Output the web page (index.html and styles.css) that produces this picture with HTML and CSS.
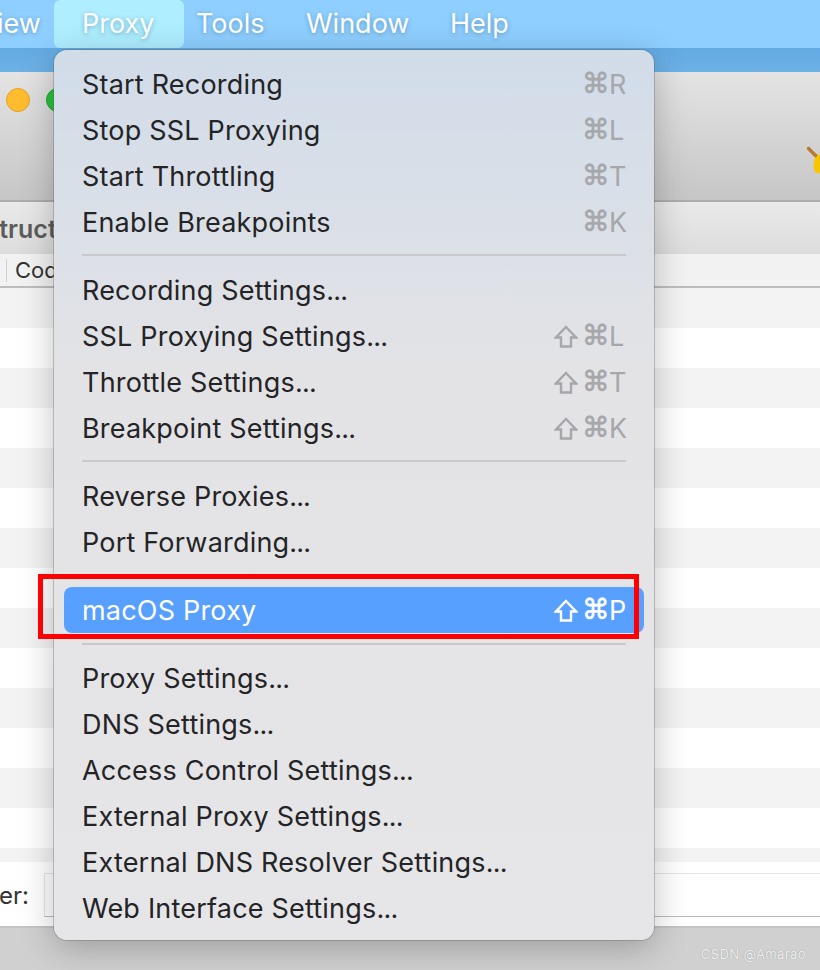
FILE: index.html
```html
<!DOCTYPE html>
<html lang="en">
<head>
    <meta charset="UTF-8">
    <meta name="viewport" content="width=device-width, initial-scale=1.0">
    <title>Proxy menu</title>
    <link rel="stylesheet" href="styles.css">
</head>
<body>
    <svg class="defs" width="0" height="0">
        <symbol id="shift" viewBox="0 0 24 23">
            <path d="M12 2 L22 12.5 H17 V21.5 H7 V12.5 H2 Z" fill="none" stroke="currentColor" stroke-width="2.4" stroke-linejoin="miter"/>
        </symbol>
    </svg>
    <div class="screen">
        <div class="menubar">
            <span class="bar-item bar-view">iew</span>
            <span class="bar-item bar-active">Proxy</span>
            <span class="bar-item bar-tools">Tools</span>
            <span class="bar-item bar-window">Window</span>
            <span class="bar-item bar-help">Help</span>
        </div>
        <div class="wallpaper"></div>

        <div class="window">
            <div class="toolbar">
                <span class="light light-yellow"></span>
                <span class="light light-green"></span>
                <svg class="broom" width="24" height="32" viewBox="0 0 24 32">
                    <path d="M13 9 L20 12 L20 30 L11 27 Q7 18 13 9 Z" fill="#f7c600"/>
                    <path d="M4.5 3.5 L11.5 10.5" stroke="#b9782c" stroke-width="3.4" stroke-linecap="round"/>
                </svg>
            </div>
            <div class="tabs"><span class="tab-label">Struct</span></div>
            <div class="table-head"><span class="head-sep"></span><span class="head-label">Code</span></div>
            <div class="rows">
                <div class="row"></div><div class="row"></div><div class="row"></div><div class="row"></div>
                <div class="row"></div><div class="row"></div><div class="row"></div><div class="row"></div>
                <div class="row"></div><div class="row"></div><div class="row"></div><div class="row"></div>
                <div class="row"></div><div class="row"></div>
                <div class="row row-last"></div>
            </div>
            <div class="filter">
                <span class="filter-label">er:</span>
                <div class="filter-input"></div>
            </div>
            <div class="statusbar"></div>
        </div>

        <div class="menu">
            <div class="item"><span>Start Recording</span><span class="keys"><span class="cmd">⌘</span><span class="letter">R</span></span></div>
            <div class="item"><span>Stop SSL Proxying</span><span class="keys"><span class="cmd">⌘</span><span class="letter">L</span></span></div>
            <div class="item"><span>Start Throttling</span><span class="keys"><span class="cmd">⌘</span><span class="letter">T</span></span></div>
            <div class="item"><span>Enable Breakpoints</span><span class="keys"><span class="cmd">⌘</span><span class="letter">K</span></span></div>
            <div class="sep"></div>
            <div class="item"><span>Recording Settings<span class="dots">...</span></span></div>
            <div class="item"><span>SSL Proxying Settings<span class="dots">...</span></span><span class="keys"><svg class="shift"><use href="#shift"/></svg><span class="cmd">⌘</span><span class="letter">L</span></span></div>
            <div class="item"><span>Throttle Settings<span class="dots">...</span></span><span class="keys"><svg class="shift"><use href="#shift"/></svg><span class="cmd">⌘</span><span class="letter">T</span></span></div>
            <div class="item"><span>Breakpoint Settings<span class="dots">...</span></span><span class="keys"><svg class="shift"><use href="#shift"/></svg><span class="cmd">⌘</span><span class="letter">K</span></span></div>
            <div class="sep"></div>
            <div class="item"><span>Reverse Proxies<span class="dots">...</span></span></div>
            <div class="item"><span>Port Forwarding<span class="dots">...</span></span></div>
            <div class="sep"></div>
            <div class="item item-active"><span>macOS Proxy</span><span class="keys"><svg class="shift"><use href="#shift"/></svg><span class="cmd">⌘</span><span class="letter">P</span></span></div>
            <div class="sep"></div>
            <div class="item"><span>Proxy Settings<span class="dots">...</span></span></div>
            <div class="item"><span>DNS Settings<span class="dots">...</span></span></div>
            <div class="item"><span>Access Control Settings<span class="dots">...</span></span></div>
            <div class="item"><span>External Proxy Settings<span class="dots">...</span></span></div>
            <div class="item"><span>External DNS Resolver Settings<span class="dots">...</span></span></div>
            <div class="item"><span>Web Interface Settings<span class="dots">...</span></span></div>
        </div>

        <div class="red-box"></div>
        <div class="watermark">CSDN @Amarao</div>
    </div>
</body>
</html>
```

FILE: styles.css
```css
html, body {
    margin: 0;
    padding: 0;
}
body {
    font-family: Inter, "Liberation Sans", sans-serif;
    background-color: #d0d0d0;
}
.defs {
    display: block;
}
.screen {
    position: relative;
    width: 820px;
    height: 970px;
    overflow: hidden;
    display: flex;
    flex-direction: column;
}

/* top menu bar */
.menubar {
    height: 48px;
    flex: none;
    display: flex;
    background-color: #8ecfff;
    color: #fff;
    font-size: 27px;
    line-height: 48px;
}
.bar-item {
    text-shadow: 0 1px 4px rgba(40,90,140,0.45);
}
.bar-view {
    margin-left: -3px;
    width: 57px;
}
.bar-active {
    width: 130px;
    padding-left: 28px;
    box-sizing: border-box;
    background-color: #aeeeff;
    border-radius: 6px;
}
.bar-tools {
    margin-left: 12px;
    width: 110px;
}
.bar-window {
    width: 144px;
}
.wallpaper {
    height: 24px;
    flex: none;
    background: linear-gradient(#63abe4, #6db1e6);
}

/* app window behind the menu */
.window {
    flex: 1;
    display: flex;
    flex-direction: column;
}
.toolbar {
    position: relative;
    height: 130px;
    flex: none;
    box-sizing: border-box;
    padding: 16px 6px 0;
    display: flex;
    gap: 16px;
    background: linear-gradient(#e4e4e4, #c6c6c6);
    border-bottom: 2px solid #adadad;
}
.light {
    width: 24px;
    height: 24px;
    border-radius: 50%;
    box-sizing: border-box;
}
.light-yellow {
    background-color: #febc2e;
    border: 1px solid #e0a32a;
}
.light-green {
    background-color: #29c33e;
    border: 1px solid #1fa52f;
}
.broom {
    position: absolute;
    right: -8px;
    top: 73px;
}
.tabs {
    height: 52px;
    flex: none;
    background: linear-gradient(#eaeaea, #dcdcdc);
    font-size: 25px;
    font-weight: 600;
    color: #5c5c5c;
    line-height: 54px;
    white-space: nowrap;
}
.tab-label {
    margin-left: -17px;
}
.table-head {
    height: 34px;
    flex: none;
    box-sizing: border-box;
    display: flex;
    align-items: center;
    background-color: #f2f2f2;
    border-bottom: 2px solid #bdbdbd;
    font-size: 22px;
    color: #333;
}
.head-sep {
    width: 1px;
    height: 23px;
    margin-left: 6px;
    margin-right: 8px;
    background-color: #cfcfcf;
}
.rows {
    flex: none;
}
.row {
    height: 40px;
    background-color: #fff;
}
.row:nth-child(odd) {
    background-color: #f3f3f3;
}
.row-last {
    height: 14px;
}
.filter {
    height: 66px;
    flex: none;
    box-sizing: border-box;
    padding: 11px 0 9px;
    display: flex;
    align-items: center;
    gap: 15px;
    background-color: #fff;
    border-bottom: 2px solid #c4c4c4;
    font-size: 24px;
    color: #333;
}
.filter-label {
    margin-left: -1px;
}
.filter-input {
    flex: 1;
    height: 44px;
    box-sizing: border-box;
    border: 1px solid #e4e4e4;
    border-bottom-color: #bbb;
    border-right: none;
    background-color: #fff;
}
.statusbar {
    flex: 1;
    background-color: #d0d0d0;
}

/* proxy dropdown */
.menu {
    position: absolute;
    left: 54px;
    top: 50px;
    width: 600px;
    height: 890px;
    box-sizing: border-box;
    padding: 11px 10px;
    border-radius: 13px;
    background: linear-gradient(#d1dce9, #e3e3e6 36%, #e6e6e8);
    box-shadow: 0 0 0 1px rgba(90,90,90,0.3), 0 8px 34px rgba(0,0,0,0.25);
    font-size: 27px;
    letter-spacing: 0.2px;
    color: #242426;
}
.item {
    height: 46px;
    box-sizing: border-box;
    padding: 0 18px;
    display: flex;
    justify-content: space-between;
    align-items: center;
    border-radius: 8px;
    white-space: nowrap;
}
.dots {
    letter-spacing: -0.8px;
}
.keys {
    display: flex;
    align-items: center;
    gap: 3px;
    color: #a6a7ab;
}
.shift {
    width: 24px;
    height: 23px;
    margin-right: 1px;
}
.cmd {
    width: 24px;
    text-align: center;
    font-family: "DejaVu Sans", sans-serif;
    font-size: 28px;
    line-height: 32px;
    -webkit-text-stroke: 0.5px currentColor;
}
.letter {
    width: 17px;
}
.item-active {
    background-color: #57a0ff;
    color: #fff;
}
.item-active .keys {
    color: #fff;
}
.sep {
    height: 2px;
    margin: 9px 18px 11px;
    background-color: #c9c9cb;
}
.item-active + .sep {
    margin: 10px 18px;
}

.red-box {
    position: absolute;
    left: 38px;
    top: 574px;
    width: 601px;
    height: 65px;
    box-sizing: border-box;
    border: 5px solid #ff0000;
}
.watermark {
    position: absolute;
    right: 14px;
    top: 946px;
    font-size: 13px;
    letter-spacing: 0.4px;
    color: #f1f1f1;
    text-shadow: 0 0 1px #888;
}
```
